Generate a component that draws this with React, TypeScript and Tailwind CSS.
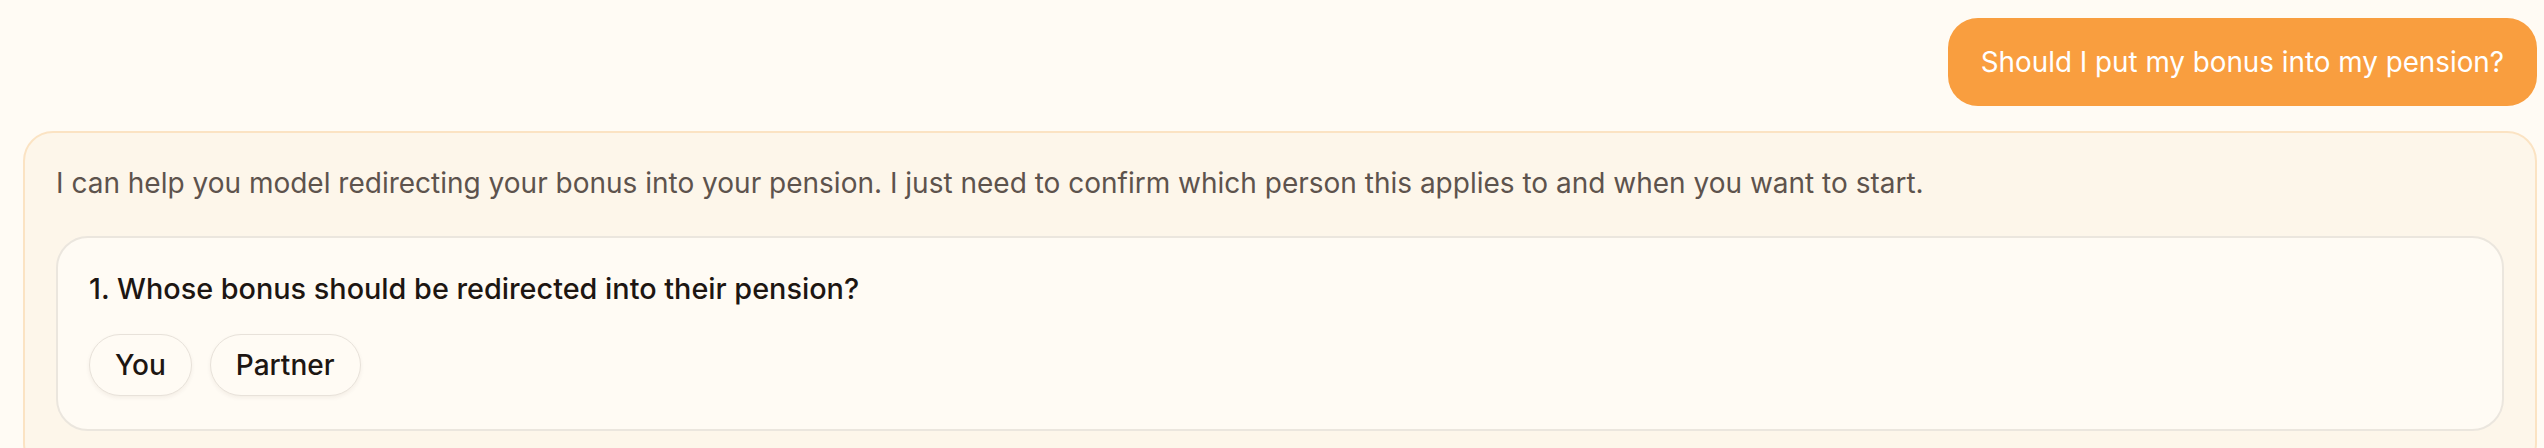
import React from "react";

export default function App() {
  return (
    <div
      className="h-[448px] w-full overflow-hidden bg-[#fffbf4] pl-[23px] pr-[7px] pt-[18px]"
      style={{ fontFamily: "Inter, 'Noto Sans', sans-serif" }}
    >
      <div className="flex justify-end">
        <div className="rounded-[30px] bg-[#f99e3f] px-[33px] py-[24px] text-[27.8px] leading-[40px] text-white">
          Should I put my bonus into my pension?
        </div>
      </div>
      <div className="mt-[25px] rounded-[30px] border-2 border-[#fbe3c3] bg-[#fdf6ea] px-[31px] pb-[40px] pt-[31px]">
        <p className="text-[28px] leading-[39px] text-[#5d534d]">
          I can help you model redirecting your bonus into your pension. I just need to confirm which person this applies to and when you want to start.
        </p>
        <div className="mt-[33px] rounded-[32px] border-2 border-[#ebe6de] bg-[#fffbf4] px-[31px] pb-[33px] pt-[31px]">
          <p className="text-[28.8px] font-medium leading-[39px] text-[#1d1612]">
            1. Whose bonus should be redirected into their pension?
          </p>
          <div className="mt-[26px] flex gap-[18px]">
            {["You", "Partner"].map((o) => (
              <button
                key={o}
                className="rounded-full border-[1.5px] border-[#e8e2da] bg-[#fffbf4] px-[25px] py-[10.5px] text-[28px] font-medium leading-[39px] text-[#1d1612] shadow-[0_2px_4px_rgba(60,40,20,0.06)]"
              >
                {o}
              </button>
            ))}
          </div>
        </div>
      </div>
    </div>
  );
}
